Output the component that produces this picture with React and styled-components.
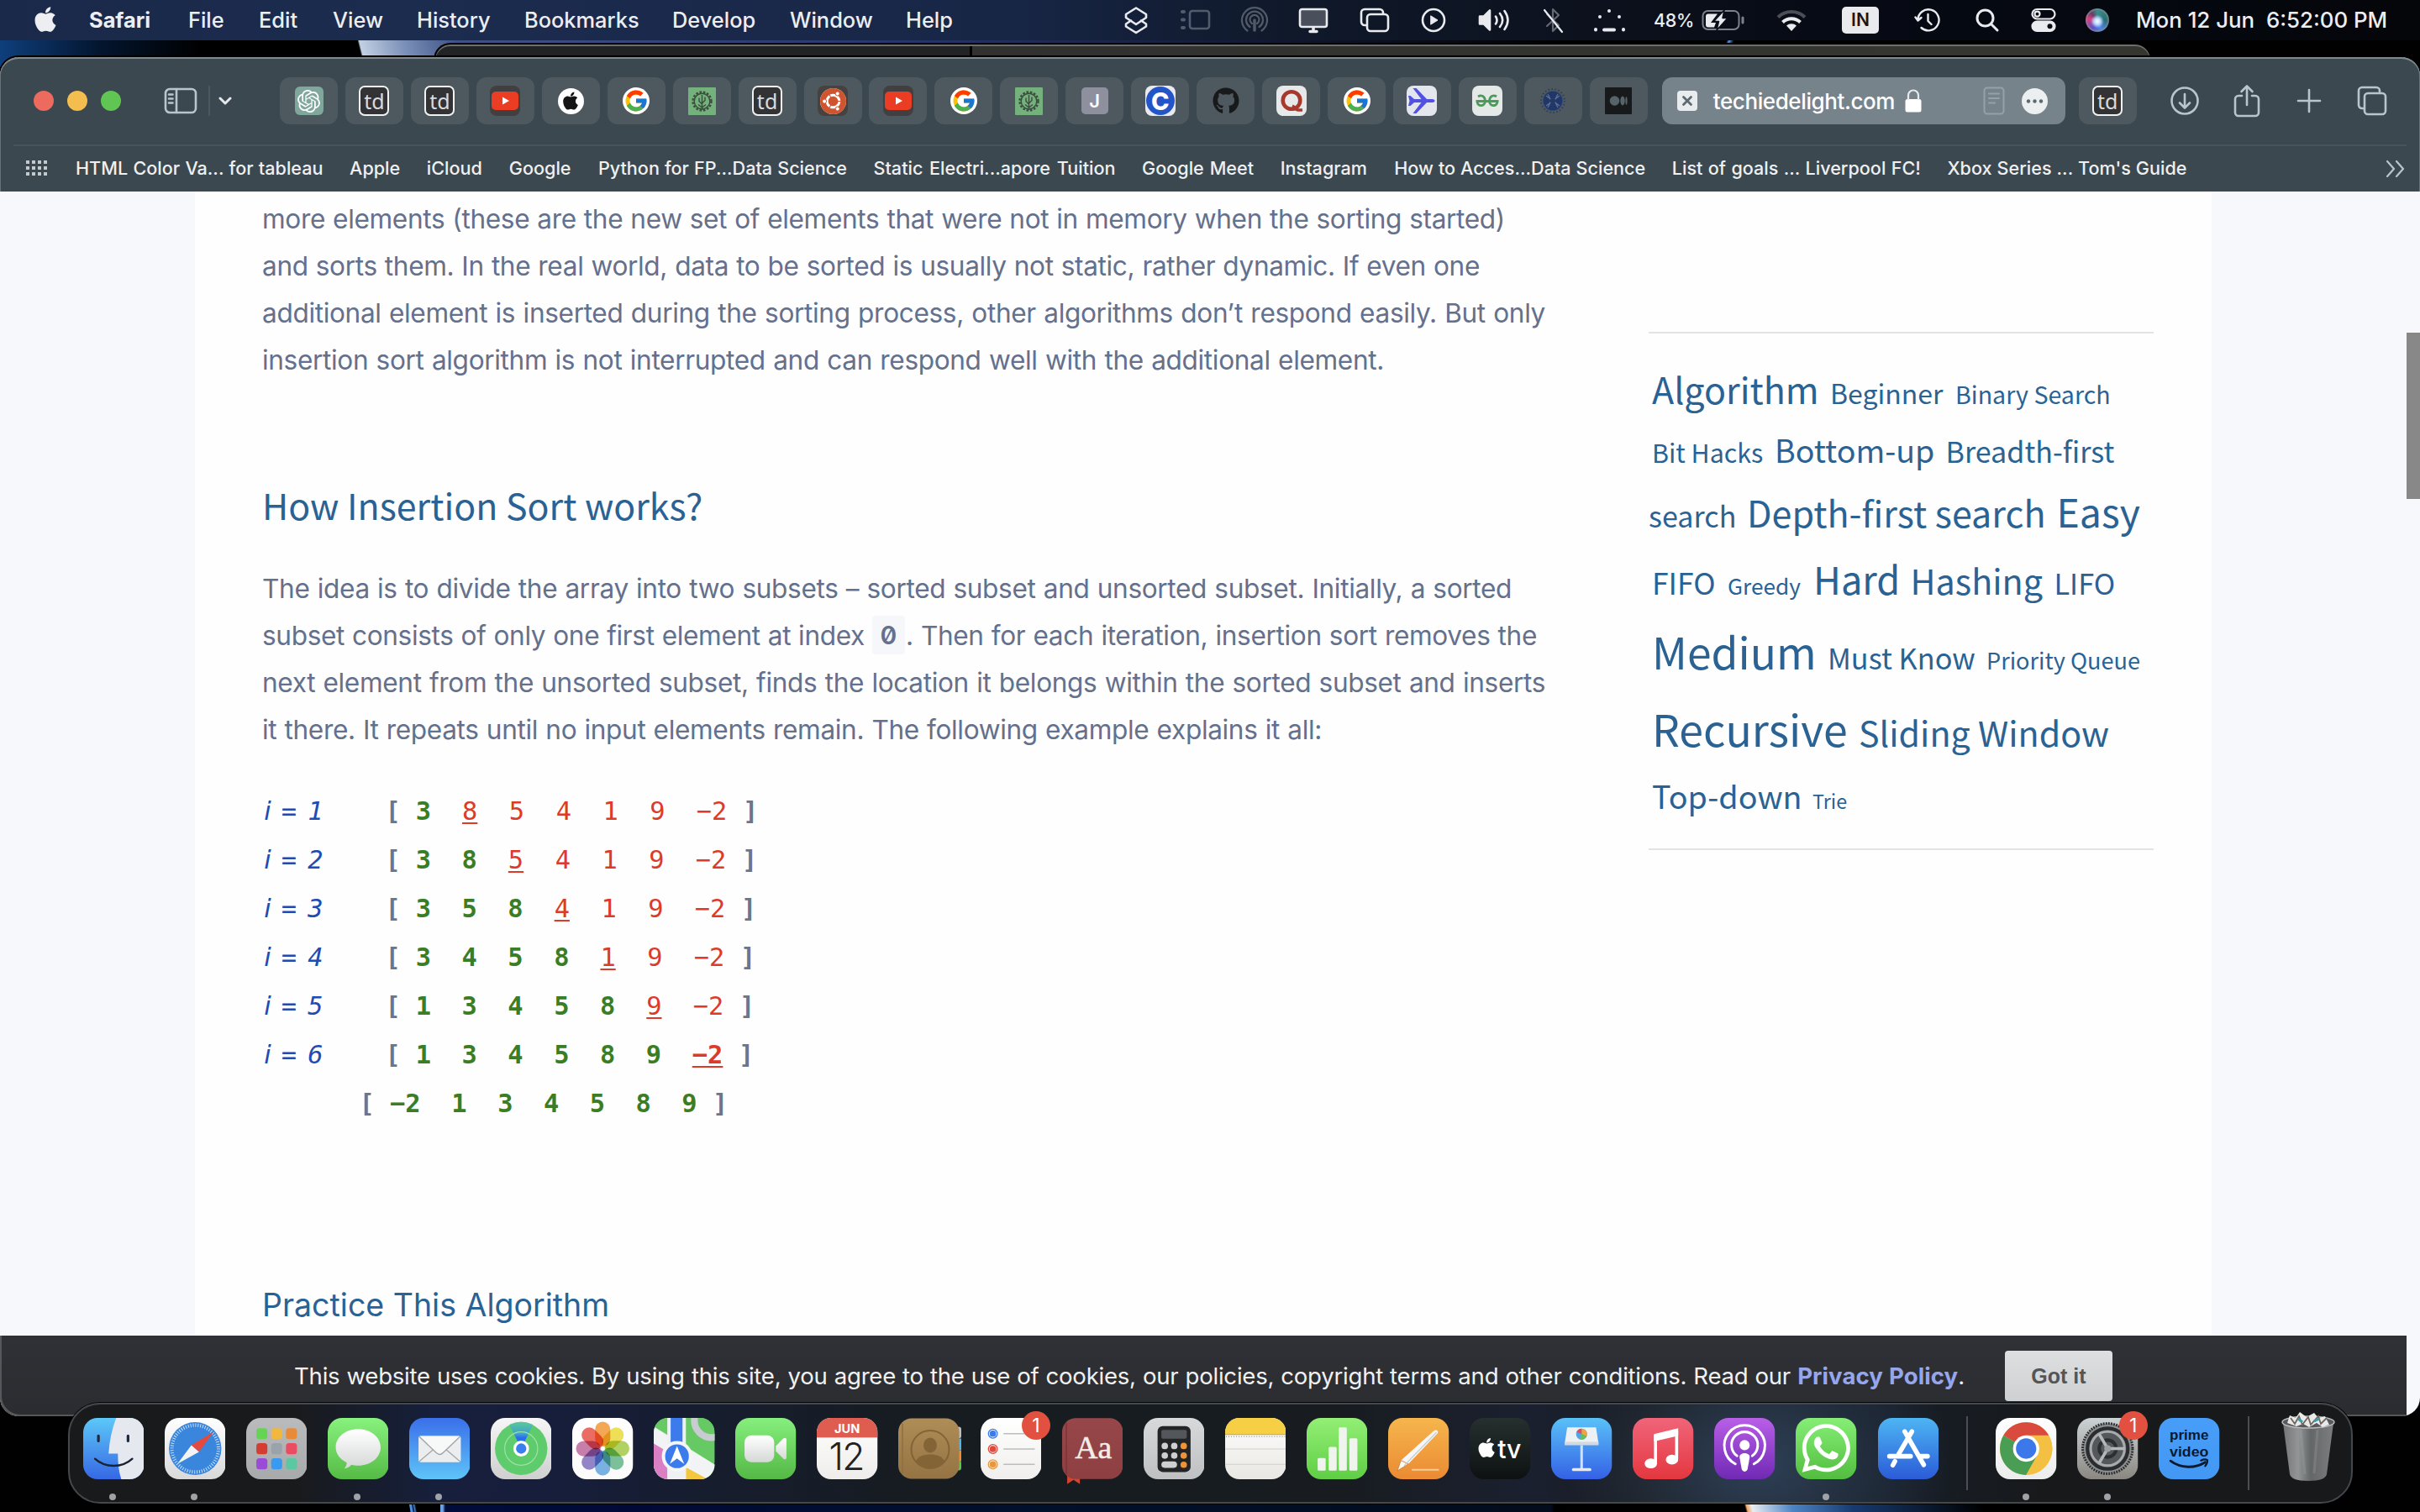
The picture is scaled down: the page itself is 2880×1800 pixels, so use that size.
import React from "react";
import styled, { createGlobalStyle } from "styled-components";
import { FaApple, FaUbuntu, FaGithub, FaWhatsapp } from "react-icons/fa";
import { FcGoogle } from "react-icons/fc";
import { SiOpenai } from "react-icons/si";

const sans = `Inter, "Liberation Sans", sans-serif`;
const source = `"Noto Sans CJK SC", "Noto Sans", sans-serif`;
const mono = `"DejaVu Sans Mono", monospace`;

const GlobalStyle = createGlobalStyle`
  * { box-sizing: border-box; }
  body { margin: 0; background: #000; font-family: ${sans}; }
  svg { display: block; flex: none; }
`;

const Desktop = styled.div`
  position: relative;
  width: 2880px;
  height: 1800px;
  overflow: hidden;
  background:
    linear-gradient(76deg, transparent 7px, #c3d0e3 9px, #7b90b8 60px, #3f5288 120px, #2a3870 600px, transparent 1400px) 424px 48px / 1900px 24px no-repeat,
    linear-gradient(115deg, transparent 40%, #5b93dd 50%, transparent 70%) 2044px 48px / 26px 5px no-repeat,
    linear-gradient(90deg, #0f3f7c, #03152e 120px, #000 240px) 0 48px / 426px 60px no-repeat,
    linear-gradient(75deg, transparent 6px, #f0a565 8px, #e9edf2 14px, #4d84c4 60px, #173a70 130px, #000 280px) 2072px 1786px / 420px 14px no-repeat,
    linear-gradient(90deg, #6da2e4 0 3px, #000c3a 6px, #010a38 200px, #01102c 700px, #020c1c 1322px, #000 1326px) 524px 1786px / 1340px 14px no-repeat,
    linear-gradient(80deg, transparent 4px, #4d8fe0 5px 7px, #02112e 8px, #3f7fd0 10px, transparent 12px) 484px 1786px / 14px 14px no-repeat,
    #010102;
`;

/* ---------- menu bar ---------- */

const MenuBar = styled.header`
  display: flex;
  align-items: center;
  height: 48px;
  padding-left: 37px;
  color: #eceef2;
  background: linear-gradient(90deg, #1a2949 0, #1c2c4f 500px, #182646 1200px, #101a2c 1500px, #0c111d 1900px, #060a14 2200px, #04060a 2880px);
  & > * { flex: none; }
`;

const AppleMark = styled.span`
  display: flex;
  width: 69px;
  padding-bottom: 2px;
`;

const MenuItem = styled.span`
  width: ${(p) => p.$slot}px;
  font-size: 25.4px;
  line-height: 46px;
  font-weight: ${(p) => (p.$bold ? 700 : 500)};
  white-space: pre;
`;

const StatusSlot = styled.span`
  display: flex;
  align-items: center;
  justify-content: center;
  width: ${(p) => p.$w}px;
  height: 48px;
  opacity: ${(p) => (p.$dim ? 0.3 : 1)};
`;

const BatteryText = styled.span`
  width: 57px;
  font-size: 21.5px;
  font-weight: 500;
  letter-spacing: -0.3px;
`;

const InputBadge = styled.span`
  flex: none;
  width: 44px;
  height: 32px;
  border-radius: 5px;
  background: #e8eaed;
  color: #16181d;
  font-size: 21px;
  line-height: 32px;
  font-weight: 600;
  text-align: center;
`;

const Siri = styled.span`
  flex: none;
  width: 28px;
  height: 28px;
  border-radius: 50%;
  background:
    radial-gradient(circle at 50% 55%, #fff 0, #b9d8ff 18%, transparent 38%),
    conic-gradient(#3a8d8a, #2b6d72 90deg, #4f86e8 160deg, #5d53c8 210deg, #d9417f 280deg, #6b3c66 320deg, #3a8d8a);
  box-shadow: inset 0 0 0 2px rgba(130, 140, 150, 0.6);
`;

const Clock = styled.span`
  width: 299px;
  font-size: 25.85px;
  line-height: 46px;
  font-weight: 500;
  white-space: pre;
`;

/* ---------- windows ---------- */

const BackWindow = styled.div`
  position: absolute;
  left: 516px;
  top: 51px;
  width: 2045px;
  height: 60px;
  border-radius: 20px 20px 0 0;
  border: 2px solid #000;
  border-bottom: 0;
  box-shadow: inset 0 2px 0 #6d6e6e;
  background: linear-gradient(90deg, #222325 0 636px, #000 636px 639px, #313130 639px, #33342f 1300px, #35372f);
`;

const Window = styled.main`
  position: absolute;
  left: 0;
  top: 68px;
  width: 2880px;
  height: 1618px;
  display: flex;
  flex-direction: column;
  border-radius: 22px;
  overflow: hidden;
  background: #f7f8fb;
  box-shadow: 0 0 0 2px #000;
`;

const Chrome = styled.div`
  height: 160px;
  flex: none;
  background: #3c484f;
  border-radius: 22px 22px 0 0;
  box-shadow: inset 0 2px 0 #80898d, inset 1px 0 0 #66717a, inset -1px 0 0 #66717a;
`;

const Toolbar = styled.div`
  display: flex;
  align-items: center;
  height: 104px;
  padding: 0 0 0 40px;
  & > * { flex: none; }
`;

const Lights = styled.div`
  display: flex;
  gap: 16px;
  width: 155px;
`;

const Light = styled.i`
  width: 24px;
  height: 24px;
  border-radius: 50%;
  background: ${(p) => p.$c};
`;

const SidebarControls = styled.div`
  display: flex;
  align-items: center;
  width: 138px;
`;

const ThinRule = styled.i`
  width: 2px;
  height: 36px;
  margin: 0 10px 0 13px;
  background: #4c585f;
`;

const Tabs = styled.div`
  display: flex;
  gap: 8.95px;
`;

const Tab = styled.div`
  display: flex;
  align-items: center;
  justify-content: center;
  width: 69px;
  height: 56px;
  border-radius: 12px;
  background: #4d595f;
`;

const Fav = styled.span`
  display: flex;
  align-items: center;
  justify-content: center;
  width: ${(p) => p.$s || 36}px;
  height: ${(p) => p.$s || 36}px;
  border-radius: ${(p) => (p.$r === undefined ? 8 : p.$r)}px;
  background: ${(p) => p.$bg || "transparent"};
  color: ${(p) => p.$fg || "#fff"};
  border: ${(p) => p.$border || "0"};
  font: ${(p) => p.$font || `500 24px ${sans}`};
  line-height: 1;
  overflow: hidden;
`;

const Address = styled.div`
  display: flex;
  align-items: center;
  width: 480px;
  height: 56px;
  margin: 0 16px 0 17px;
  padding: 0 21px 0 18px;
  border-radius: 12px;
  background: #77838b;
  color: #fff;
`;

const Host = styled.span`
  width: 228px;
  margin-left: 19px;
  font-size: 26px;
  font-weight: 500;
  letter-spacing: -0.4px;
  white-space: nowrap;
`;

const PageMenu = styled.span`
  display: flex;
  margin-left: 20px;
`;

const Tools = styled.div`
  display: flex;
  align-items: center;
  margin-left: 20px;
`;

const ToolSlot = styled.span`
  display: flex;
  justify-content: center;
  width: ${(p) => p.$w}px;
`;

const Divider = styled.div`
  height: 2px;
  margin: 0 16px;
  background: #48545b;
`;

const Bookmarks = styled.nav`
  display: flex;
  align-items: center;
  height: 52px;
  padding: 0 18px 0 31px;
  color: #eef0f1;
`;

const Bookmark = styled.span`
  flex: none;
  width: ${(p) => p.$w}px;
  margin-right: 31.6px;
  font-size: 21.6px;
  font-weight: 500;
  white-space: nowrap;
  text-align-last: justify;
`;

const BookmarkGrid = styled.span`
  flex: none;
  display: grid;
  grid-template-columns: repeat(4, 4px);
  gap: 3px 3px;
  width: 59px;
`;

const GridDot = styled.i`
  width: 4px;
  height: 4px;
  background: #c3c9cc;
`;

const Spacer = styled.span`
  flex: 1;
`;

/* ---------- page ---------- */

const Page = styled.section`
  position: relative;
  height: 1362px;
  overflow: hidden;
  padding: 0 248px 0 232px;
`;

const Sheet = styled.div`
  display: flex;
  width: 2400px;
  height: 1362px;
  padding-left: 80px;
  background: #fefefe;
`;

const Article = styled.article`
  width: 1650px;
  padding-top: 5px;
  color: #64708c;
`;

const Line = styled.div`
  display: ${(p) => (p.$flex ? "flex" : "block")};
  width: ${(p) => p.$w}px;
  font-size: 31.6px;
  line-height: 56px;
  letter-spacing: -0.35px;
  white-space: nowrap;
  text-align-last: justify;
`;

const LinePart = styled.span`
  width: ${(p) => p.$w}px;
`;

const InlineCode = styled.code`
  width: 39px;
  height: 46px;
  margin: 4px 1px 0 9px;
  border-radius: 4px;
  background: #f6f7fa;
  font: 600 30px/46px ${sans};
  font-feature-settings: "zero";
  letter-spacing: 0;
  text-align: center;
  text-align-last: center;
`;

const Heading = styled.h2`
  margin: 113px 0 43px;
  font: 400 42.9px/60px ${source};
  color: #2a6293;
  white-space: nowrap;
`;

const SubHeading = styled.h3`
  margin: 186px 0 0;
  font: 400 37.5px/50px ${sans};
  color: #2a6293;
  white-space: nowrap;
`;

const Trace = styled.div`
  margin-top: 40px;
`;

const TraceRow = styled.div`
  display: flex;
  height: 58px;
  padding-left: ${(p) => p.$indent || 0}px;
  font: 400 30.4px/58px ${mono};
  white-space: pre;
`;

const StepPart = styled.i`
  width: ${(p) => p.$w}px;
  margin-right: ${(p) => p.$r || 0}px;
  font-family: ${(p) => (p.$plain ? `"DejaVu Sans", sans-serif` : mono)};
  font-style: italic;
  text-align: center;
  color: #1f4cb4;
`;

const Bracket = styled.span`
  width: 18px;
  font-weight: 700;
  color: #6a7590;
`;

const Cell = styled.span`
  width: ${(p) => p.$w}px;
  text-align: center;
  color: ${(p) => p.$c};
  font-weight: ${(p) => (p.$bold ? 700 : 400)};
`;

const Num = styled.span`
  text-decoration: ${(p) => (p.$u ? "underline" : "none")};
  text-decoration-thickness: 2px;
  text-underline-offset: 3px;
`;

const Aside = styled.aside`
  width: 601px;
  height: 617px;
  margin-top: 167px;
  padding-top: 35px;
  border-top: 2px solid #e2e3e5;
  border-bottom: 2px solid #e2e3e5;
`;

const TagLine = styled.div`
  display: flex;
  align-items: baseline;
  height: ${(p) => p.$h}px;
  padding-left: ${(p) => p.$x}px;
`;

const Tag = styled.a`
  flex: none;
  width: ${(p) => p.$slot}px;
  font: 400 ${(p) => p.$s}px/60px ${source};
  color: #2a6293;
  white-space: nowrap;
`;

const Thumb = styled.i`
  position: absolute;
  right: 0;
  top: 168px;
  width: 16px;
  height: 198px;
  background: #888;
`;

const Cookies = styled.footer`
  display: flex;
  width: 2864px;
  height: 96px;
  padding: 18px 0 0 350px;
  background: linear-gradient(#303136, #2b2c30);
  color: #f1f1f3;
  box-shadow: inset 2px -2px 0 #55575a;
  border-radius: 0 0 0 22px;
`;

const CookieText = styled.p`
  flex: none;
  width: 1988px;
  margin: 0 48px 0 0;
  font-size: 27.6px;
  line-height: 60px;
  letter-spacing: -0.25px;
  white-space: nowrap;
  text-align-last: justify;
`;

const Policy = styled.b`
  color: #95a6ec;
  letter-spacing: 0.05px;
`;

const GotIt = styled.button`
  width: 128px;
  height: 60px;
  padding: 0;
  border: 0;
  border-radius: 4px;
  background: linear-gradient(#dedfe1, #cfd0d2);
  color: #555;
  font: 700 25px/60px "Liberation Sans", sans-serif;
`;

/* ---------- dock ---------- */

const DockBar = styled.div`
  position: absolute;
  left: 81px;
  top: 1670px;
  width: 2719px;
  height: 120px;
  display: flex;
  padding: 16px 0 0 15.5px;
  border: 2px solid #43484d;
  border-radius: 38px;
  box-shadow: 0 0 0 1px #050505;
  background:
    radial-gradient(ellipse 230px 170px at 2010px 60%, #2e4056, rgba(46, 64, 86, 0) 100%),
    linear-gradient(90deg, #191a1b 0 260px, #161f3b 430px, #161e3c 560px, #161d2e 760px, #171c22 980px, #181c20 1500px, #1b2030 1740px, #191b1e 1880px, #171e29 2150px, #18191b 2350px, #18191a);
  & > * { flex: none; }
`;

const DockItem = styled.div`
  position: relative;
  width: 72.5px;
  height: 100px;
  margin-right: 24.6px;
  &::after {
    content: "";
    display: ${(p) => (p.$open ? "block" : "none")};
    width: 8px;
    height: 8px;
    margin: 17px 0 0 31.5px;
    border-radius: 50%;
    background: #9fa2a6;
  }
`;

const DockRule = styled.i`
  width: 2px;
  height: 88px;
  margin: -2px ${(p) => p.$r}px 0 ${(p) => p.$l}px;
  background: #4c4e51;
`;

const Badge = styled.span`
  position: absolute;
  right: -11px;
  top: -8px;
  width: 34px;
  height: 34px;
  border-radius: 50%;
  background: #e2513f;
  color: #fff;
  font: 400 23px/34px ${sans};
  text-align: center;
`;

const Trash = styled.div`
  margin: -8px 0 0 0;
`;

/* ---------- glyph helpers ---------- */

const Stroke = ({ w = 36, h = 36, sw = 2.6, c = "#e9ebef", children }) => (
  <svg width={w} height={h} viewBox={`0 0 ${w} ${h}`} fill="none" stroke={c} strokeWidth={sw} strokeLinecap="round" strokeLinejoin="round">
    {children}
  </svg>
);

const CopyGlyph = () => (
  <Stroke w={36} h={30}>
    <path d="M8 21H6a4 4 0 0 1-4-4V6a4 4 0 0 1 4-4h18a4 4 0 0 1 4 4v1" />
    <rect x="9" y="8" width="25" height="20" rx="4" />
  </Stroke>
);

const TabsGlyph = ({ c }) => (
  <Stroke c={c}>
    <path d="M8 27H6a4 4 0 0 1-4-4V6a4 4 0 0 1 4-4h17a4 4 0 0 1 4 4v2" />
    <rect x="9" y="9" width="25" height="25" rx="4" />
  </Stroke>
);

const TdFav = () => (
  <Fav $bg="#333335" $border="2px solid #f0f1f1" $r={7} $font={`400 25px "Noto Sans", sans-serif`} $fg="#d9dadb">
    td
  </Fav>
);

const YoutubeFav = () => (
  <Fav $bg="#413f3f">
    <svg width="36" height="36" viewBox="0 0 36 36">
      <rect x="2" y="7" width="32" height="22" rx="5" fill="#ea3d24" />
      <path d="M15 13.500l8 4.500-8 4.500z" fill="#fff" />
    </svg>
  </Fav>
);

const GoogleFav = () => (
  <Fav $bg="#fff" $r={18} $s={32}>
    <FcGoogle size={30} />
  </Fav>
);

const GearTreeFav = () => (
  <Fav $bg="#75b17c" $s={33} $r={1}>
    <svg width="33" height="33" viewBox="0 0 33 33" fill="none" stroke="#3a4d3e">
      <circle cx="16.500" cy="16.500" r="11" strokeWidth="2.400" strokeDasharray="2.600 1.800" />
      <circle cx="16.500" cy="16.500" r="9.300" strokeWidth="1.400" />
      <path d="M16.500 27V9M16.500 20l-3.500-3.500v-4M16.500 19l3.500-3.500v-4M16.500 24l-4.500-3.500M16.500 24l4.500-3.500" strokeWidth="1.400" />
    </svg>
  </Fav>
);

const tabs = [
  <Fav $bg="#7fa79c" $s={34} $r={6}><SiOpenai size={27} /></Fav>,
  <TdFav />,
  <TdFav />,
  <YoutubeFav />,
  <Fav $bg="#fff" $fg="#151515" $r={18} $s={31}><FaApple size={24} /></Fav>,
  <GoogleFav />,
  <GearTreeFav />,
  <TdFav />,
  <Fav $bg="#45423f"><Fav $bg="#fff" $fg="#cf5430" $r={18} $s={31}><FaUbuntu size={33} /></Fav></Fav>,
  <YoutubeFav />,
  <GoogleFav />,
  <GearTreeFav />,
  <Fav $bg="#8f909d" $s={32} $r={5} $font={`600 22px ${sans}`}>J</Fav>,
  <Fav $bg="#e8eaee"><Fav $bg="#2355c8" $s={34} $r={17} $font={`800 29px ${sans}`}>C</Fav></Fav>,
  <Fav $fg="#17191b"><FaGithub size={32} /></Fav>,
  <Fav $bg="#e6e8ea">
    <svg width="36" height="36" viewBox="0 0 36 36" fill="none" stroke="#a8382c">
      <circle cx="18" cy="17.500" r="10.300" strokeWidth="4.600" />
      <path d="M19 24c3 1 3.500 5 6.500 5H31" strokeWidth="3.400" />
    </svg>
  </Fav>,
  <GoogleFav />,
  <Fav $bg="#e3e6ec">
    <svg width="36" height="36" viewBox="0 0 36 36" fill="#5152e0">
      <path d="M2 12h2.500l4.500 4h8.500L7.500 3h4L24 16h6.500c4 0 4 4 0 4H24L11.500 33h-4l10-13H9l-4.500 4H2l1.500-6z" />
    </svg>
  </Fav>,
  <Fav $bg="#e4e8e6">
    <svg width="36" height="36" viewBox="0 0 36 36" fill="none" stroke="#4c9a5b" strokeWidth="2.800">
      <path d="M7 13c3-2 8-1.500 8.500 5 0 7-9 7.500-9.500 1M29 13c-3-2-8-1.500-8.500 5 0 7 9 7.500 9.500 1M4.500 18.500h27" />
    </svg>
  </Fav>,
  <Fav>
    <svg width="34" height="34" viewBox="0 0 34 34" fill="none" stroke="#2b3e62">
      <circle cx="17" cy="17" r="14" strokeWidth="2" strokeDasharray="1.500 2.500" />
      <circle cx="17" cy="17" r="11.500" fill="#20376b" stroke="none" />
      <path d="M11 9l4 8-4 8M23 9l-4 8 4 8M9 11l16 12M25 11L9 23" stroke="#60718b" strokeWidth="1.300" />
      <circle cx="17" cy="17" r="3" fill="#20376b" />
    </svg>
  </Fav>,
  <Fav $bg="#17191a" $s={32} $r={1}>
    <svg width="32" height="32" viewBox="0 0 32 32" fill="#56646a">
      <circle cx="11.500" cy="16" r="5.800" />
      <ellipse cx="21" cy="16" rx="2.700" ry="5.400" />
      <ellipse cx="25.500" cy="16" rx="1.100" ry="4.800" />
    </svg>
  </Fav>,
];

const menuItems = [
  ["Safari", 118, true],
  ["File", 84],
  ["Edit", 88],
  ["View", 100],
  ["History", 128],
  ["Bookmarks", 176],
  ["Develop", 140],
  ["Window", 138],
  ["Help", 256],
];

const bookmarks = [
  ["HTML Color Va... for tableau", 294.5],
  ["Apple", 60],
  ["iCloud", 66.5],
  ["Google", 74.5],
  ["Python for FP...Data Science", 296],
  ["Static Electri...apore Tuition", 288],
  ["Google Meet", 133],
  ["Instagram", 104],
  ["How to Acces...Data Science", 299],
  ["List of goals ... Liverpool FC!", 296],
  ["Xbox Series ... Tom's Guide", 285],
];

const tagLines = [
  { h: 72.5, x: 4, tags: [["Algorithm", 43, 212], ["Beginner", 32, 149], ["Binary Search", 28.6, 180]] },
  { h: 73.5, x: 4, tags: [["Bit Hacks", 30.4, 146], ["Bottom-up", 37.6, 203.5], ["Breadth-first", 34.1, 200]] },
  { h: 81, x: 0, tags: [["search", 34.1, 117], ["Depth-first search", 43, 368.5], ["Easy", 46.4, 100]] },
  { h: 85.5, x: 4, tags: [["FIFO", 35.5, 90], ["Greedy", 26.2, 102], ["Hard", 45.2, 115.5], ["Hashing", 41.3, 171], ["LIFO", 34.3, 80]] },
  { h: 92.5, x: 4, tags: [["Medium", 51.6, 209], ["Must Know", 34.3, 189], ["Priority Queue", 27.1, 190]] },
  { h: 80, x: 4, tags: [["Recursive", 51.8, 246], ["Sliding Window", 41.2, 300]] },
  { h: 60, x: 4, tags: [["Top-down", 37.7, 191], ["Trie", 23.3, 60]] },
];

const green = "#3a7d24";
const red = "#dd3a2a";

const traces = [
  { sorted: ["3"], key: "8", rest: ["5", "4", "1", "9", "−2"] },
  { sorted: ["3", "8"], key: "5", rest: ["4", "1", "9", "−2"] },
  { sorted: ["3", "5", "8"], key: "4", rest: ["1", "9", "−2"] },
  { sorted: ["3", "4", "5", "8"], key: "1", rest: ["9", "−2"] },
  { sorted: ["1", "3", "4", "5", "8"], key: "9", rest: ["−2"] },
  { sorted: ["1", "3", "4", "5", "8", "9"], key: "−2", rest: [] },
];

const numWidth = (n, bold) => (n.length > 1 ? 73.6 : bold ? 54.8 : 55.8);

/* ---------- dock artwork ---------- */

const grad = (id, a, b) => (
  <linearGradient id={id} x1="0" y1="0" x2="0" y2="1">
    <stop offset="0" stopColor={a} />
    <stop offset="1" stopColor={b} />
  </linearGradient>
);

const Tile = ({ id, a, b, children }) => (
  <svg width="72.5" height="73" viewBox="0 0 72 72" preserveAspectRatio="none">
    <defs>
      {grad(`g-${id}`, a, b)}
      {grad(`w-${id}`, "#ffffff", "#d5d8d6")}
      <clipPath id={`c-${id}`}><rect width="72" height="72" rx="17" /></clipPath>
    </defs>
    <g clipPath={`url(#c-${id})`}>
      <rect width="72" height="72" fill={`url(#g-${id})`} />
      {children}
    </g>
  </svg>
);

const Finder = () => (
  <Tile id="finder" a="#5cc8f8" b="#3668e4">
    <path d="M39 0c-5 13-8 27-9 42h11c0 11 1 21 4 30h27V0z" fill="#e6e8ef" />
    <path d="M18 21v6M53 21v6" stroke="#1d2a44" strokeWidth="3.200" strokeLinecap="round" />
    <path d="M14 48c12 11 32 11 44 0" fill="none" stroke="#1a2233" strokeWidth="2.400" strokeLinecap="round" />
  </Tile>
);

const SafariIcon = () => (
  <Tile id="safari" a="#ffffff" b="#d9d9d9">
    <circle cx="36" cy="36" r="31" fill="#3a86dd" />
    <circle cx="36" cy="36" r="27.500" fill="none" stroke="#d7e8fb" strokeWidth="4" strokeDasharray=".9 1.980" />
    <path d="M58 16L40.500 40 31.500 32z" fill="#e5493d" />
    <path d="M15 54L31.500 32l9 8z" fill="#f2f3f5" />
  </Tile>
);

const Launchpad = () => {
  const colors = ["#65d452", "#f1b73f", "#e78b38", "#d43d32", "#9aa3aa", "#ea4c62", "#9a4cd8", "#3a9af0", "#5cc8a2"];
  return (
    <Tile id="launch" a="#babbbd" b="#a8a9ab">
      {colors.map((c, i) => (
        <rect key={c} x={12 + (i % 3) * 17.5} y={12 + Math.floor(i / 3) * 17.7} width="13" height="13" rx="3.500" fill={c} />
      ))}
    </Tile>
  );
};

const Messages = () => (
  <Tile id="msg" a="#88f27e" b="#55bb45">
    <path d="M36 13c15 0 26.500 9.500 26.500 21.500S51 56 36 56c-3 0-5.500-.3-8-1-2 2.500-5 4-8.500 4.500 2-2.200 3-4.500 3-7C14.500 48.500 9.500 42 9.500 34.500 9.500 22.500 21 13 36 13z" fill="url(#w-msg)" />
  </Tile>
);

const Mail = () => (
  <Tile id="mail" a="#3a6fe9" b="#5fc4f8">
    <rect x="11" y="21" width="50" height="31" rx="3" fill="#ecedee" />
    <path d="M12 51l19-16M60 51L41 35" stroke="#a5a8ab" strokeWidth="1.300" />
    <path d="M12 22l20 19c2.500 2.400 5.500 2.400 8 0l20-19" fill="#f7f8f8" stroke="#a0a3a6" strokeWidth="1.300" />
  </Tile>
);

const FindMy = () => (
  <Tile id="find" a="#f6f6f6" b="#cfcfcf">
    <circle cx="36" cy="36" r="31" fill="#5ecb6c" />
    <defs>
      <linearGradient id="beam" x1="0" y1="0" x2="0" y2="1">
        <stop offset="0" stopColor="#5acb98" />
        <stop offset=".45" stopColor="#3f9fd0" />
        <stop offset=".6" stopColor="#2a6cf0" />
        <stop offset="1" stopColor="#2a6cf0" />
      </linearGradient>
    </defs>
    <path d="M36 36L22 8a31 31 0 0 1 28 0z" fill="url(#beam)" />
    <circle cx="36" cy="36" r="19.500" fill="none" stroke="#9be3a2" strokeWidth="1.200" />
    <circle cx="36" cy="36" r="7.700" fill="#3a7ff0" stroke="#fff" strokeWidth="3.200" />
  </Tile>
);

const Photos = () => {
  const petals = ["#f29a38", "#ecdc3c", "#a6cc4b", "#67b98c", "#64a8e0", "#8272c2", "#c06a9f", "#e9544a"];
  return (
    <Tile id="photos" a="#ffffff" b="#fbfbfb">
      {petals.map((c, i) => (
        <rect key={c} x="27" y="4.500" width="18" height="29" rx="9" fill={c} opacity=".86" transform={`rotate(${i * 45} 36 36)`} style={{ mixBlendMode: "multiply" }} />
      ))}
    </Tile>
  );
};

const Maps = () => (
  <Tile id="maps" a="#72d36e" b="#5fc45c">
    <path d="M0 10l74 46v20H0z" fill="#f2f3f4" />
    <path d="M0 30l20 12v30H0z" fill="#db7fc4" />
    <path d="M38 58l26 14H38z" fill="#f3c83f" />
    <path d="M38 0h34v52L38 32z" fill="#66c963" />
    <path d="M0 0h18v20L0 10z" fill="#66c963" />
    <path d="M16 0h22v72H16z" fill="#eef0f3" />
    <path d="M20 0h14v40H20z" fill="#3b7bec" />
    <circle cx="68" cy="3" r="20" fill="none" stroke="#c9cbd2" strokeWidth="8" />
    <circle cx="27.500" cy="45" r="16" fill="#3b7bec" stroke="#f4f5f7" strokeWidth="4" />
    <path d="M27.500 33l8.500 21-8.500-6.500L19 54z" fill="#fff" />
  </Tile>
);

const FaceTime = () => (
  <Tile id="face" a="#86ef7d" b="#54b845">
    <rect x="11" y="20.500" width="35" height="31.500" rx="8" fill="url(#w-face)" />
    <path d="M48 33l9-9c1.500-1.200 3.500-.6 3.500 1.500v21c0 2-2 2.700-3.500 1.500l-9-9z" fill="url(#w-face)" />
  </Tile>
);

const Calendar = () => (
  <Tile id="cal" a="#ffffff" b="#eeedeb">
    <rect width="72" height="23" fill="#de5c50" />
    <text x="36" y="17.500" textAnchor="middle" fontFamily="Inter, sans-serif" fontWeight="700" fontSize="14.500" fill="#fff">JUN</text>
    <text x="35" y="61" textAnchor="middle" fontFamily="Inter, sans-serif" fontWeight="300" fontSize="44" letterSpacing="-1.500" fill="#222">12</text>
  </Tile>
);

const Contacts = () => (
  <svg width="76" height="73" viewBox="0 0 76 72">
    <defs>{grad("ct", "#ae8d57", "#957343")}</defs>
    <rect x="62" y="10" width="13" height="14" rx="3" fill="#b9bcbf" />
    <rect x="62" y="24" width="13" height="14" fill="#52b2e8" />
    <rect x="62" y="38" width="13" height="13" fill="#f08d2f" />
    <rect x="62" y="50" width="13" height="12" rx="3" fill="#5bc54c" />
    <rect width="72.500" height="72" rx="16" fill="url(#ct)" />
    <path d="M5 6v60" stroke="#8f6f40" strokeWidth="1.500" />
    <circle cx="38" cy="37" r="22.500" fill="none" stroke="#836437" strokeWidth="2" />
    <ellipse cx="38" cy="32" rx="8" ry="9" fill="#836437" />
    <path d="M21 51c3-6 9-8 17-8s14 2 17 8c-8 10.500-26 10.500-34 0z" fill="#836437" />
  </svg>
);

const Reminders = () => (
  <Tile id="rem" a="#ffffff" b="#f0efed">
    {["#3b79ee", "#df4a3f", "#e9973c"].map((c, i) => (
      <g key={c}>
        <circle cx="14.500" cy={18.500 + i * 18} r="5.300" fill="none" stroke={c} strokeWidth="1.300" />
        <circle cx="14.500" cy={18.500 + i * 18} r="3.800" fill={c} />
        <path d={`M27 ${18.5 + i * 18}h37`} stroke="#bdbdbd" strokeWidth="1.600" />
      </g>
    ))}
  </Tile>
);

const Dictionary = () => (
  <svg width="72.5" height="80" viewBox="0 0 72 79">
    <defs>{grad("dc", "#97474a", "#8d3f41")}</defs>
    <path d="M6 66h15v12l-7.500-5L6 78z" fill="#d8432f" />
    <rect width="72" height="72" rx="16" fill="url(#dc)" />
    <path d="M5 6v60" stroke="#7b3537" strokeWidth="1.500" />
    <text x="37" y="47" textAnchor="middle" fontFamily="Liberation Serif, serif" fontSize="37.500" fill="#f3ece9" stroke="#f3ece9" strokeWidth=".5">Aa</text>
  </svg>
);

const Calculator = () => (
  <Tile id="calc" a="#d8d9da" b="#bfc0c1">
    <rect x="16.500" y="9.500" width="39" height="54" rx="6" fill="#232425" />
    <rect x="21" y="14" width="30" height="10.500" rx="2" fill="#53565a" />
    {[0, 1].map((r) => [0, 1, 2].map((c) => (
      <circle key={`${r}${c}`} cx={25 + c * 11.200} cy={33 + r * 11.200} r="3.800" fill={c === 2 ? "#ee9336" : "#cdcfd1"} />
    )))}
    <rect x="21" y="51" width="18.500" height="7.600" rx="3.800" fill="#cdcfd1" />
    <circle cx="47.400" cy="55" r="3.800" fill="#ee9336" />
  </Tile>
);

const Notes = () => (
  <Tile id="notes" a="#ffffff" b="#e8e7e2">
    <rect width="72" height="19" fill="#f6cf45" />
    <path d="M0 19.500h72" stroke="#b29a53" strokeWidth="1" />
    <path d="M1 22h72" stroke="#a5a5a1" strokeWidth="1.500" strokeDasharray="1 2" />
    <path d="M0 36.500h72M0 54.500h72" stroke="#cfcfcb" strokeWidth="1.200" />
  </Tile>
);

const Numbers = () => (
  <Tile id="num" a="#93ef75" b="#5fce45">
    {[[13, 47], [26, 34], [38, 11], [50.5, 24]].map(([x, y]) => (
      <rect key={x} x={x} y={y} width="9.500" height={62 - y} rx="1.500" fill="#eff5ec" />
    ))}
  </Tile>
);

const Pages = () => (
  <Tile id="pages" a="#f6b64c" b="#eb8a33">
    <path d="M28 61h32" stroke="#f9cf9d" strokeWidth="2" />
    <path d="M11 62l4-12L53 16c3-3 7-2 5.500 2L24 54z" fill="#f6f6f6" />
    <path d="M11 62l13-8-9-4z" fill="#fffaf2" stroke="#c4752b" strokeWidth=".8" />
    <path d="M19 56L57 17" stroke="#c9cacc" strokeWidth="1.200" />
  </Tile>
);

const AppleTv = () => (
  <Tile id="tv" a="#26302f" b="#0e1112">
    <g transform="translate(7 22)"><FaApple size={26} color="#fff" /></g>
    <text x="47" y="47" textAnchor="middle" fontFamily="Inter, sans-serif" fontWeight="500" fontSize="30" fill="#fff">tv</text>
  </Tile>
);

const Keynote = () => (
  <Tile id="key" a="#5ac1f8" b="#3461e6">
    <path d="M19 11h34l3 19H16z" fill="#eef1f4" />
    <path d="M16 28h40v4H16z" fill="#d3d9e0" />
    <path d="M36 32v28" stroke="#d6e2f3" strokeWidth="3" />
    <rect x="24.500" y="59" width="23" height="3.500" rx="1.700" fill="#e3eaf5" />
    <circle cx="36" cy="19" r="6.500" fill="#4ba7e6" />
    <path d="M36 19v-6.500a6.500 6.500 0 0 1 6 9z" fill="#f0a53c" />
    <path d="M36 19l6 2.500a6.500 6.500 0 0 1-8 3.700z" fill="#68be5c" />
    <path d="M36 19v-6.500a6.500 6.500 0 0 0-5.800 4z" fill="#dd4d63" />
  </Tile>
);

const Music = () => (
  <Tile id="music" a="#f0657a" b="#e4373f">
    <path d="M27 53V20M52 48V15" fill="none" stroke="#fff" strokeWidth="3.600" />
    <path d="M25.200 19l28.600-7v9l-28.600 6.500z" fill="#fff" />
    <ellipse cx="21.500" cy="53.500" rx="7.300" ry="5.800" fill="#fff" />
    <ellipse cx="46.500" cy="49" rx="7.300" ry="5.800" fill="#fff" />
  </Tile>
);

const Podcasts = () => (
  <Tile id="pod" a="#b95fe8" b="#7029b4">
    <g fill="none" stroke="#fff" strokeWidth="3" strokeLinecap="round">
      <path d="M25 54a24 24 0 1 1 22 0" />
      <path d="M27 44.500a15.500 15.500 0 1 1 18 0" />
    </g>
    <circle cx="36" cy="32" r="6" fill="#fff" />
    <path d="M30 46c0-6 12-6 12 0l-2.500 14c-.8 4-6.200 4-7 0z" fill="#fff" />
  </Tile>
);

const WhatsApp = () => (
  <Tile id="wa" a="#86ee76" b="#52bd3f">
    <g transform="translate(3.5 3)"><FaWhatsapp size={65} color="#fff" /></g>
  </Tile>
);

const AppStore = () => (
  <Tile id="store" a="#4db5f4" b="#2b5bd8">
    <g stroke="#fff" strokeWidth="5.500" strokeLinecap="round">
      <path d="M40 16L23.500 44M31.500 16L54 55M13.500 45h25M49 45h9.500M20 51l-2.500 4.500" />
    </g>
  </Tile>
);

const ChromeIcon = () => (
  <Tile id="chrome" a="#ffffff" b="#ececec">
    <circle cx="36" cy="36" r="31" fill="#f4c042" />
    <path d="M36 36L9.200 20.500A31 31 0 0 1 62.800 20.500z" fill="#d94b3d" />
    <path d="M36 36L9.200 20.500A31 31 0 0 0 36 67l13.400-23.300z" fill="#4a9d55" />
    <path d="M36 20.500h26.800A31 31 0 0 1 36 67l13.400-23.300z" fill="#f4c042" />
    <circle cx="36" cy="36" r="15.500" fill="#fff" />
    <circle cx="36" cy="36" r="12" fill="#3c78ea" />
  </Tile>
);

const Settings = () => (
  <Tile id="set" a="#ccd3d6" b="#8a8781">
    <circle cx="36" cy="36" r="29.500" fill="#8b8f91" stroke="#2c2d2f" strokeWidth="3" strokeDasharray="1.800 1.300" />
    <circle cx="36" cy="36" r="24" fill="#55585b" stroke="#2b2c2e" strokeWidth="4" />
    <circle cx="36" cy="36" r="20" fill="none" stroke="#a7abad" strokeWidth="3" />
    <circle cx="36" cy="36" r="10" fill="none" stroke="#2d2e30" strokeWidth="4" />
    <path d="M36 36h20M36 36L26 19M36 36L26 53" stroke="#b3b7b9" strokeWidth="3.500" />
    <circle cx="36" cy="36" r="4" fill="#9da1a3" />
  </Tile>
);

const Prime = () => (
  <Tile id="prime" a="#489df8" b="#4398f4">
    <g fontFamily="Liberation Sans, sans-serif" fontWeight="700" fontSize="16" fill="#0c1a30" textAnchor="middle">
      <text x="36" y="26" textLength="46" lengthAdjust="spacingAndGlyphs">prime</text>
      <text x="36" y="45" textLength="46" lengthAdjust="spacingAndGlyphs">video</text>
    </g>
    <path d="M14 50.500c12 9 29 9 41 1.500" fill="none" stroke="#0c1a30" strokeWidth="2.800" strokeLinecap="round" />
    <path d="M50 50c3-1.500 6-1.500 7.500-.5.300 2.500-.8 5-2.500 7" fill="none" stroke="#0c1a30" strokeWidth="2.200" strokeLinecap="round" />
  </Tile>
);

const TrashIcon = () => (
  <svg width="66" height="85" viewBox="0 0 66 85">
    <defs>
      <linearGradient id="tr" x1="0" x2="1">
        <stop offset="0" stopColor="#7d8082" />
        <stop offset=".3" stopColor="#a0a3a4" />
        <stop offset=".55" stopColor="#6c6f71" />
        <stop offset="1" stopColor="#87898a" />
      </linearGradient>
    </defs>
    <path d="M3 14l8 61c1 5 8 8 22 8s21-3 22-8l8-61z" fill="url(#tr)" opacity=".9" />
    <ellipse cx="33" cy="13" rx="31" ry="7" fill="#58595b" stroke="#b9bbbc" strokeWidth="1.500" />
    <path d="M8 14l3-9 7 3 5-7 8 6 9-5 5 6 8-2 5 10-8 3-7-5-9 5-7-4-8 3z" fill="#e9e9e8" />
    <path d="M12 8l5 7 5-9 4 10 7-9 3 9 9-10 3 9 7-7" fill="none" stroke="#6f665f" strokeWidth="1.800" />
    <path d="M21 9l5 4M40 12l6-3" stroke="#3f9ba8" strokeWidth="3" />
    <path d="M24 22l5 53M44 22l-4 52" stroke="#a9acae" strokeWidth="3" opacity=".25" />
  </svg>
);

const dock = [
  [Finder, true], [SafariIcon, true], [Launchpad], [Messages, true], [Mail, true], [FindMy], [Photos], [Maps],
  [FaceTime], [Calendar], [Contacts], [Reminders, false, 1], [Dictionary], [Calculator], [Notes], [Numbers],
  [Pages], [AppleTv], [Keynote], [Music], [Podcasts], [WhatsApp, true], [AppStore],
];
const dockTail = [[ChromeIcon, true], [Settings, true, 1], [Prime]];

const renderDock = ([Icon, open, badge], i) => (
  <DockItem key={i} $open={open}>
    <Icon />
    {badge && <Badge>{badge}</Badge>}
  </DockItem>
);

const tool = "#b9c5cc";

export default function App() {
  return (
    <Desktop>
      <GlobalStyle />
      <MenuBar>
        <AppleMark><FaApple size={34} /></AppleMark>
        {menuItems.map(([t, w, b]) => (
          <MenuItem key={t} $slot={w} $bold={b}>{t}</MenuItem>
        ))}
        <StatusSlot $w={36}>
          <Stroke w={32} h={34}>
            <path d="M16 2.500l12 7.500v4l-12 8-12-8v-4z" />
            <path d="M10 17.500L4 21.500v3l12 7.500 12-7.500v-3l-6-4" />
          </Stroke>
        </StatusSlot>
        <StatusSlot $w={106} $dim>
          <Stroke w={36} h={28}>
            <rect x="11" y="3" width="23" height="21" rx="3" />
            <path d="M2 4h2M2 13.500h2M2 23h2" strokeWidth="4" />
          </Stroke>
        </StatusSlot>
        <StatusSlot $w={34} $dim>
          <Stroke w={34} h={34} sw={2.2}>
            <path d="M8.500 29.500a15 15 0 1 1 17 0M11.500 25a10 10 0 1 1 11 0M14 21a5.500 5.500 0 1 1 6 0" />
            <path d="M17 17v12" strokeWidth="3.500" />
          </Stroke>
        </StatusSlot>
        <StatusSlot $w={106}>
          <Stroke w={36} h={32}>
            <rect x="2" y="3" width="32" height="21" rx="2.500" fill="#4a4f5c" />
            <path d="M18 25v4M14 29.500h8" strokeWidth="3.500" />
          </Stroke>
        </StatusSlot>
        <StatusSlot $w={40}><CopyGlyph /></StatusSlot>
        <StatusSlot $w={100}>
          <Stroke w={32} h={32}>
            <circle cx="16" cy="16" r="13" />
            <path d="M13 11l8 5-8 5z" fill="#e9ebef" strokeWidth="1" />
          </Stroke>
        </StatusSlot>
        <StatusSlot $w={44}>
          <Stroke w={40} h={32}>
            <path d="M3 11.500h5l7-7v23l-7-7H3z" fill="#e9ebef" />
            <path d="M22 11.500c2 3 2 6 0 9M27 8c4 5 4 11 0 16M32.500 5c5 7 5 15 0 22" />
          </Stroke>
        </StatusSlot>
        <StatusSlot $w={96}>
          <Stroke w={28} h={34} sw={2.2}>
            <path d="M7 10l14 13-7 7V4l7 7L7 24" opacity=".4" />
            <path d="M4 5l21 26" />
          </Stroke>
        </StatusSlot>
        <StatusSlot $w={40}>
          <Stroke w={40} h={32} sw={4}>
            <path d="M19 5v.1M8 12v.1M31 12v.1M3 27v.5M36 27v.5M13 27.500h12" />
          </Stroke>
        </StatusSlot>
        <StatusSlot $w={32} />
        <BatteryText>48%</BatteryText>
        <StatusSlot $w={52}>
          <Stroke w={52} h={28} sw={2}>
            <rect x="1.500" y="3" width="43" height="22" rx="6" stroke="#7d8189" />
            <path d="M8 6.500h11l-8 10.500h6l-2 5.500H8a3 3 0 0 1-3-3v-10a3 3 0 0 1 3-3z" fill="#e9ebef" stroke="none" />
            <path d="M27 2L14.500 15.500h6L18 26l13-14.500h-6z" fill="#e9ebef" stroke="#0b101c" strokeWidth="1.500" />
            <path d="M49 11v6" stroke="#7d8189" strokeWidth="3" />
          </Stroke>
        </StatusSlot>
        <StatusSlot $w={110}>
          <svg width="36" height="26" viewBox="0 0 36 26" fill="none" strokeWidth="4">
            <path d="M2 9.500a23 23 0 0 1 32 0" stroke="#4b4e55" />
            <path d="M7.500 15.500a15 15 0 0 1 21 0" stroke="#e9ebef" />
            <path d="M12 19.500a9 9 0 0 1 12 0L18 26z" fill="#e9ebef" />
          </svg>
        </StatusSlot>
        <StatusSlot $w={54}><InputBadge>IN</InputBadge></StatusSlot>
        <StatusSlot $w={106}>
          <Stroke w={32} h={30} sw={2.4}>
            <path d="M4.500 15a12.500 12.500 0 1 1 4 9M1.500 11.500l3 4 4-3.500M16.500 8v8l4 4" />
          </Stroke>
        </StatusSlot>
        <StatusSlot $w={36}>
          <Stroke w={30} h={30} sw={3}>
            <circle cx="12.500" cy="12.500" r="9.500" />
            <path d="M19.500 19.500l7.500 7.500" />
          </Stroke>
        </StatusSlot>
        <StatusSlot $w={98}>
          <Stroke w={32} h={32} sw={2.2}>
            <rect x="2.500" y="3" width="27" height="11.500" rx="5.700" />
            <circle cx="8.500" cy="8.700" r="3" />
            <rect x="2.500" y="17.500" width="27" height="11.500" rx="5.700" fill="#e9ebef" />
            <circle cx="23.500" cy="23.200" r="3" fill="#0b0d12" stroke="none" />
          </Stroke>
        </StatusSlot>
        <StatusSlot $w={30}><Siri /></StatusSlot>
        <StatusSlot $w={31} />
        <Clock>Mon 12 Jun  6:52:00 PM</Clock>
      </MenuBar>

      <BackWindow />

      <Window>
        <Chrome>
          <Toolbar>
            <Lights>
              <Light $c="#ec6a5e" />
              <Light $c="#f4be4f" />
              <Light $c="#61c554" />
            </Lights>
            <SidebarControls>
              <Stroke w={40} h={32} c={tool}>
                <rect x="2" y="2" width="36" height="28" rx="5" />
                <path d="M15 2v28M6 8.500h4.500M6 13.500h4.500M6 18.500h4.500" />
              </Stroke>
              <ThinRule />
              <Stroke w={16} h={12} c="#e4e9ec" sw={3}><path d="M2 3l6 6 6-6" /></Stroke>
            </SidebarControls>
            <Tabs>
              {tabs.map((icon, i) => (
                <Tab key={i}>{icon}</Tab>
              ))}
            </Tabs>
            <Address>
              <svg width="24" height="24" viewBox="0 0 24 24">
                <rect width="24" height="24" rx="4" fill="#e9ecee" />
                <path d="M7.500 7.500l9 9M16.500 7.500l-9 9" stroke="#5d6970" strokeWidth="2.800" strokeLinecap="round" />
              </svg>
              <Host>techiedelight.com</Host>
              <svg width="20" height="28" viewBox="0 0 20 28">
                <rect x="0.500" y="12" width="19" height="15.500" rx="2.500" fill="#fff" />
                <path d="M4 13V7.500a6 6 0 0 1 12 0V13" fill="none" stroke="#e6eaec" strokeWidth="2.200" />
              </svg>
              <Spacer />
              <Stroke w={26} h={34} c="#96a1a7" sw={2}>
                <rect x="1.500" y="1.500" width="23" height="31" rx="3.500" />
                <path d="M7 8.500h12M7 14h12M7 19.500h7" />
              </Stroke>
              <PageMenu>
                <svg width="31" height="31" viewBox="0 0 31 31">
                  <circle cx="15.500" cy="15.500" r="15.500" fill="#eceff0" />
                  <g fill="#5d6970"><circle cx="8" cy="15.500" r="2.200" /><circle cx="15.500" cy="15.500" r="2.200" /><circle cx="23" cy="15.500" r="2.200" /></g>
                </svg>
              </PageMenu>
            </Address>
            <Tab><TdFav /></Tab>
            <Tools>
              <ToolSlot $w={74}>
                <Stroke c={tool}><circle cx="18" cy="18" r="15.500" /><path d="M18 10v16M12 20.500l6 6 6-6" /></Stroke>
              </ToolSlot>
              <ToolSlot $w={75}>
                <Stroke w={32} h={40} c={tool}><path d="M10 14H6a4 4 0 0 0-4 4v16a4 4 0 0 0 4 4h20a4 4 0 0 0 4-4V18a4 4 0 0 0-4-4h-4M16 25V2.500M9.500 9L16 2.500 22.500 9" /></Stroke>
              </ToolSlot>
              <ToolSlot $w={72}>
                <Stroke w={30} h={30} c={tool}><path d="M15 2v26M2 15h26" /></Stroke>
              </ToolSlot>
              <ToolSlot $w={78}><TabsGlyph c={tool} /></ToolSlot>
            </Tools>
          </Toolbar>
          <Divider />
          <Bookmarks>
            <BookmarkGrid>
              {Array.from({ length: 12 }, (_, i) => <GridDot key={i} />)}
            </BookmarkGrid>
            {bookmarks.map(([t, w]) => (
              <Bookmark key={t} $w={w}>{t}</Bookmark>
            ))}
            <Spacer />
            <Stroke w={23} h={22} sw={2.2} c={tool}><path d="M2 3l8 9-8 9M13 3l8 9-8 9" /></Stroke>
          </Bookmarks>
        </Chrome>

        <Page>
          <Sheet>
            <Article>
              <Line $w={1479}>more elements (these are the new set of elements that were not in memory when the sorting started)</Line>
              <Line $w={1449}>and sorts them. In the real world, data to be sorted is usually not static, rather dynamic. If even one</Line>
              <Line $w={1527}>additional element is inserted during the sorting process, other algorithms don’t respond easily. But only</Line>
              <Line $w={1335}>insertion sort algorithm is not interrupted and can respond well with the additional element.</Line>

              <Heading>How Insertion Sort works?</Heading>

              <Line $w={1487}>The idea is to divide the array into two subsets – sorted subset and unsorted subset. Initially, a sorted</Line>
              <Line $flex $w={1517}>
                <LinePart $w={717}>subset consists of only one first element at index</LinePart>
                <InlineCode>0</InlineCode>
                <LinePart $w={751}>. Then for each iteration, insertion sort removes the</LinePart>
              </Line>
              <Line $w={1527}>next element from the unsorted subset, finds the location it belongs within the sorted subset and inserts</Line>
              <Line $w={1261}>it there. It repeats until no input elements remain. The following example explains it all:</Line>

              <Trace>
                {traces.map((row, i) => (
                  <TraceRow key={i}>
                    <StepPart $w={13} $plain>i</StepPart>
                    <StepPart $w={38}>=</StepPart>
                    <StepPart $w={25} $r={70.5}>{i + 1}</StepPart>
                    <Bracket>[</Bracket>
                    {row.sorted.map((n) => (
                      <Cell key={n} $w={54.8} $c={green} $bold><Num>{n}</Num></Cell>
                    ))}
                    <Cell $w={numWidth(row.key, false)} $c={red} $bold={row.key.length > 1}><Num $u>{row.key}</Num></Cell>
                    {row.rest.map((n) => (
                      <Cell key={n} $w={numWidth(n, false)} $c={red}><Num>{n}</Num></Cell>
                    ))}
                    <Bracket>]</Bracket>
                  </TraceRow>
                ))}
                <TraceRow $indent={115.5}>
                  <Bracket>[</Bracket>
                  {["−2", "1", "3", "4", "5", "8", "9"].map((n) => (
                    <Cell key={n} $w={numWidth(n, true)} $c={green} $bold><Num>{n}</Num></Cell>
                  ))}
                  <Bracket>]</Bracket>
                </TraceRow>
              </Trace>

              <SubHeading>Practice This Algorithm</SubHeading>
            </Article>
            <Aside>
              {tagLines.map((l, i) => (
                <TagLine key={i} $h={l.h} $x={l.x}>
                  {l.tags.map(([t, s, w]) => (
                    <Tag key={t} $s={s} $slot={w}>{t}</Tag>
                  ))}
                </TagLine>
              ))}
            </Aside>
          </Sheet>
          <Thumb />
        </Page>

        <Cookies>
          <CookieText>
            This website uses cookies. By using this site, you agree to the use of cookies, our policies, copyright terms and other conditions. Read our <Policy>Privacy Policy</Policy>.
          </CookieText>
          <GotIt>Got it</GotIt>
        </Cookies>
      </Window>

      <DockBar>
        {dock.map(renderDock)}
        <DockRule $l={8.5} $r={33} />
        {dockTail.map(renderDock)}
        <DockRule $l={9} $r={37} />
        <Trash><TrashIcon /></Trash>
      </DockBar>
    </Desktop>
  );
}
